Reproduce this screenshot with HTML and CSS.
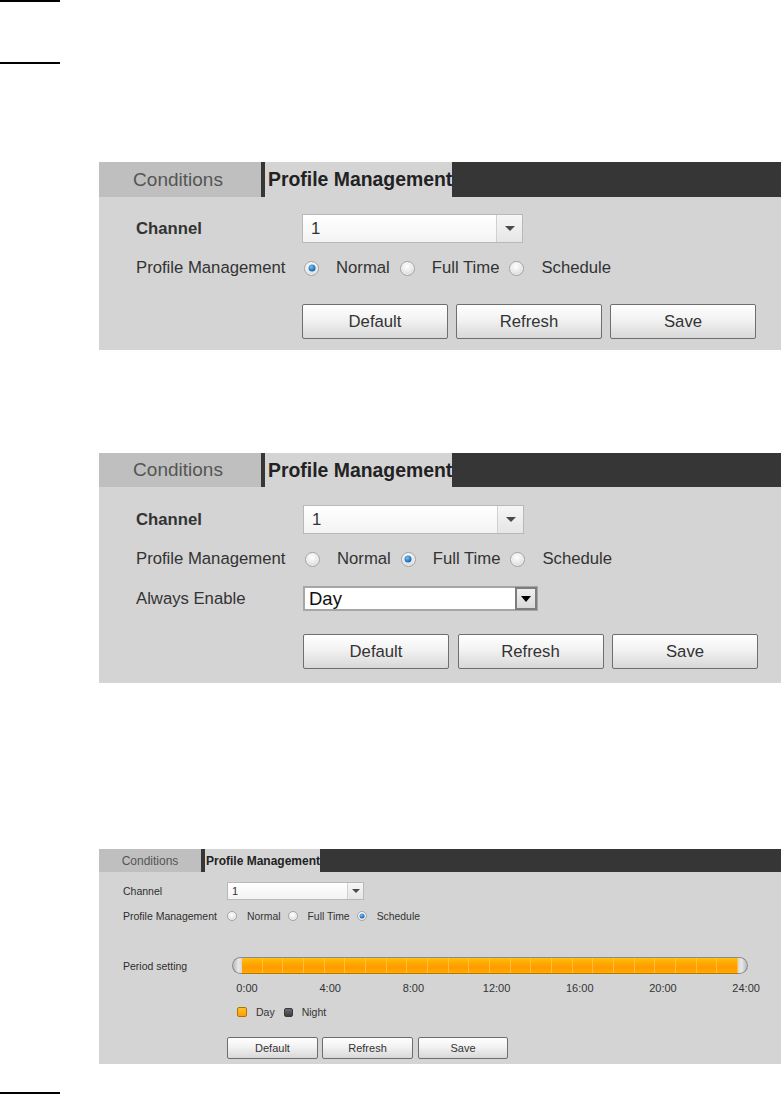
FILE: index.html
```html
<!DOCTYPE html>
<html>
<head>
<meta charset="utf-8">
<link rel="stylesheet" href="styles.css">
</head>
<body>
<div class="rule"></div>
<div class="rule rule-2"></div>

<section class="panel lg p1">
  <div class="tabs">
    <div class="tab off">Conditions</div>
    <div class="tab on">Profile Management</div>
    <div class="tab-fill"></div>
  </div>
  <div class="body">
    <div class="row row-sel">
      <div class="lbl bold">Channel</div>
      <div class="sel"><span class="sel-val">1</span><span class="sel-btn"><i class="tri"></i></span></div>
    </div>
    <div class="row row-radio">
      <div class="lbl">Profile Management</div>
      <div class="opts">
        <span class="radio checked"></span><span class="opt-txt">Normal</span>
        <span class="radio"></span><span class="opt-txt">Full Time</span>
        <span class="radio"></span><span class="opt-txt">Schedule</span>
      </div>
    </div>
    <div class="row row-btns">
      <div class="lbl"></div>
      <div class="btns"><button class="btn">Default</button><button class="btn">Refresh</button><button class="btn">Save</button></div>
    </div>
  </div>
</section>

<section class="panel lg p2">
  <div class="tabs">
    <div class="tab off">Conditions</div>
    <div class="tab on">Profile Management</div>
    <div class="tab-fill"></div>
  </div>
  <div class="body">
    <div class="row row-sel">
      <div class="lbl bold">Channel</div>
      <div class="sel"><span class="sel-val">1</span><span class="sel-btn"><i class="tri"></i></span></div>
    </div>
    <div class="row row-radio">
      <div class="lbl">Profile Management</div>
      <div class="opts">
        <span class="radio"></span><span class="opt-txt">Normal</span>
        <span class="radio checked"></span><span class="opt-txt">Full Time</span>
        <span class="radio"></span><span class="opt-txt">Schedule</span>
      </div>
    </div>
    <div class="row row-always">
      <div class="lbl">Always Enable</div>
      <div class="sel2"><span class="sel2-val">Day</span><span class="sel2-btn"><i class="tri tri-black"></i></span></div>
    </div>
    <div class="row row-btns">
      <div class="lbl"></div>
      <div class="btns"><button class="btn">Default</button><button class="btn">Refresh</button><button class="btn">Save</button></div>
    </div>
  </div>
</section>

<section class="panel sm p3">
  <div class="tabs">
    <div class="tab off">Conditions</div>
    <div class="tab on">Profile Management</div>
    <div class="tab-fill"></div>
  </div>
  <div class="body">
    <div class="row row-sel">
      <div class="lbl">Channel</div>
      <div class="sel"><span class="sel-val">1</span><span class="sel-btn"><i class="tri"></i></span></div>
    </div>
    <div class="row row-radio">
      <div class="lbl">Profile Management</div>
      <div class="opts">
        <span class="radio"></span><span class="opt-txt">Normal</span>
        <span class="radio"></span><span class="opt-txt">Full Time</span>
        <span class="radio checked"></span><span class="opt-txt">Schedule</span>
      </div>
    </div>
    <div class="row row-period">
      <div class="lbl">Period setting</div>
      <div class="bar">
        <span class="cap cap-l"></span>
        <span class="bar-fill"></span>
        <span class="cap cap-r"></span>
      </div>
    </div>
    <div class="hours">
      <span>0:00</span><span>4:00</span><span>8:00</span><span>12:00</span><span>16:00</span><span>20:00</span><span>24:00</span>
    </div>
    <div class="legend">
      <span class="sw sw-day"></span><span class="lg-txt">Day</span>
      <span class="sw sw-night"></span><span class="lg-txt">Night</span>
    </div>
    <div class="row row-btns">
      <div class="lbl"></div>
      <div class="btns"><button class="btn">Default</button><button class="btn">Refresh</button><button class="btn">Save</button></div>
    </div>
  </div>
</section>

<div class="rule rule-bottom"></div>
</body>
</html>
```

FILE: styles.css
```css
* { box-sizing: border-box; }
html, body { margin: 0; padding: 0; background: #fff; }
body {
  width: 781px;
  height: 1094px;
  overflow: hidden;
  font-family: "Liberation Sans", Arial, sans-serif;
  color: #333;
}

.rule { width: 60px; height: 2px; background: #000; }
.rule-2 { margin-top: 60px; }
.rule-bottom { margin-top: 28px; }

.panel { margin-left: 99px; background: #d4d4d4; }
.p1 { margin-top: 98px; }
.p2 { margin-top: 103px; }
.p3 { margin-top: 166px; }

.tabs { display: flex; }
.tab { display: flex; align-items: center; white-space: nowrap; overflow: hidden; }
.tab.off { justify-content: center; background: #bfbfbf; color: #555; }
.tab.on { border-left: 4px solid #363636; font-weight: bold; color: #222; }
.tab-fill { flex: 1; background: #363636; }

.row { display: flex; align-items: center; }
.lbl { flex: none; white-space: nowrap; }
.bold { font-weight: bold; }

.opts { display: flex; align-items: center; white-space: nowrap; }

.radio {
  display: inline-block;
  flex: none;
  border-radius: 50%;
  border: 1px solid #a4a4a4;
  background: radial-gradient(circle at 45% 35%, #ffffff 0%, #e9e9e9 50%, #c4c4c4 100%);
  box-shadow: inset 0 0 0 1px rgba(255,255,255,0.6);
  position: relative;
}
.radio.checked::after {
  content: "";
  position: absolute;
  left: 50%; top: 50%;
  transform: translate(-50%, -50%);
  border-radius: 50%;
  background: radial-gradient(circle at 40% 35%, #7cc0f2 0%, #2279c6 55%, #0d4a86 100%);
}

.sel { display: flex; border: 1px solid #b8b8b8; background: linear-gradient(#ffffff, #f3f3f3); }
.sel-val { flex: 1; display: flex; align-items: center; }
.sel-btn {
  display: flex; align-items: center; justify-content: center;
  border-left: 1px solid #d0d0d0;
  background: linear-gradient(#f6f6f6, #e6e6e6);
}
.tri {
  display: block; width: 0; height: 0;
  border-left: 5px solid transparent;
  border-right: 5px solid transparent;
  border-top: 5px solid #4a4a4a;
}
.tri-black { border-top-color: #000; }

.btns { display: flex; }
.btn {
  font-family: "Liberation Sans", Arial, sans-serif;
  color: #333;
  border: 1px solid #6e6e6e;
  border-radius: 2px;
  background: linear-gradient(#ffffff 0%, #f2f2f2 45%, #d8d8d8 100%);
  padding: 0;
  margin: 0;
}

/* ---------- large panels ---------- */
.lg .tabs { height: 35px; }
.p2 .tabs { height: 34px; }
.lg .tab { font-size: 19px; }
.lg .tab.on { font-size: 19.4px; }
.lg .tab.off { width: 162px; padding-right: 4px; }
.lg .tab.on { width: 191px; padding-left: 3px; }
.lg .body { padding: 17px 0 11px 37px; }
.p2 .body { padding: 18px 0 14px 37px; }
.lg .lbl { width: 166px; font-size: 16.7px; }
.p2 .lbl { width: 167px; }
.lg .row-sel { height: 29px; }
.lg .row-radio { height: 28px; margin-top: 11px; }
.lg .row-always { height: 25px; margin-top: 13px; }
.lg .row-btns { height: 35px; margin-top: 22px; }
.p2 .row-btns { margin-top: 23px; }

.lg .sel { width: 221px; height: 29px; }
.lg .sel-val { padding-left: 8px; font-size: 16.7px; color: #333; }
.lg .sel-btn { width: 26px; }

.lg .radio { width: 15px; height: 15px; margin-left: 2px; }
.lg .radio.checked::after { width: 7px; height: 7px; }
.lg .opt-txt { font-size: 16.7px; margin-left: 17px; margin-right: 8px; }

.sel2 {
  display: flex; width: 235px; height: 25px;
  border: 2px solid #a6a6a6; background: #fff;
}
.sel2-val { flex: 1; display: flex; align-items: center; padding-left: 4px; font-size: 18.5px; color: #111; }
.sel2-btn {
  width: 22px; display: flex; align-items: center; justify-content: center;
  border: 2px solid #7d7d7d;
  background: linear-gradient(#efefef, #dadada);
  margin: -1px -1px -1px 0;
}
.sel2-btn .tri { border-left-width: 5px; border-right-width: 5px; border-top-width: 6px; }

.lg .btn { width: 146px; height: 35px; font-size: 16.7px; }
.lg .btn + .btn { margin-left: 8px; }
.p2 .btn + .btn { margin-left: 8.5px; }

/* ---------- small panel ---------- */
.sm .tabs { height: 23px; }
.sm .tab { font-size: 12px; }
.sm .tab.off { width: 102px; }
.sm .tab.on { width: 119px; padding-left: 1px; }
.sm .body { padding: 10px 0 5px 24px; }
.sm .lbl { width: 104px; font-size: 10.5px; color: #2e2e2e; }
.sm .row-sel { height: 18px; }
.sm .row-radio { height: 16px; margin-top: 8px; }
.sm .row-period { height: 17px; margin-top: 33px; }
.sm .row-btns { height: 22px; margin-top: 18px; }

.sm .sel { width: 137px; height: 18px; }
.sm .sel-val { padding-left: 4px; font-size: 11px; }
.sm .sel-btn { width: 16px; }
.sm .tri { border-left-width: 4px; border-right-width: 4px; border-top-width: 4px; }

.sm .radio { width: 10px; height: 10px; margin-left: 0; }
.sm .radio.checked::after { width: 5px; height: 5px; }
.sm .opt-txt { font-size: 10.4px; margin-left: 10px; margin-right: 7px; }

.bar { display: flex; height: 17px; margin-left: 5px; }
.cap {
  width: 10px; height: 17px; flex: none;
  border: 1px solid #8e8e8e;
}
.cap-l { border-radius: 9px 0 0 9px; border-right: none; background: linear-gradient(90deg, #b8b8b8, #e8e8e8 60%, #d6d6d6); }
.cap-r { border-radius: 0 9px 9px 0; border-left: none; background: linear-gradient(90deg, #d6d6d6, #e8e8e8 40%, #b8b8b8); }
.bar-fill {
  width: 496px; height: 17px;
  border-top: 1px solid #8a8a8a;
  border-bottom: 1px solid #b07a00;
  background-image:
    repeating-linear-gradient(90deg, transparent 0, transparent 19.667px, rgba(255, 200, 90, 0.7) 19.667px, rgba(255, 200, 90, 0.7) 20.667px),
    linear-gradient(#ffbf10 0%, #ffa800 35%, #ff9a00 65%, #ffaa00 100%);
}

.hours {
  display: grid;
  grid-template-columns: repeat(7, 83.2px);
  justify-items: center;
  height: 14px;
  margin-top: 7px;
  margin-left: calc(104px - 21.6px);
  font-size: 11px;
  line-height: 14px;
  color: #333;
}

.legend {
  display: flex; align-items: center;
  height: 14px; margin-top: 10px;
  margin-left: 114px;
  font-size: 10.5px;
}
.sw { display: inline-block; flex: none; border-radius: 2px; }
.sw-day { width: 10px; height: 10px; border: 1px solid #b27400; background: linear-gradient(#ffc030, #ff9f00); }
.sw-night { width: 9px; height: 9px; margin-left: 9px; border: 1px solid #3a3a3a; background: linear-gradient(#6a6a6a, #3d3d3d); }
.lg-txt { margin-left: 9px; }

.sm .btn { width: 91px; height: 22px; font-size: 11px; }
.sm .btn + .btn { margin-left: 4px; }
.sm .btn:last-child { width: 90px; margin-left: 5px; }
```
